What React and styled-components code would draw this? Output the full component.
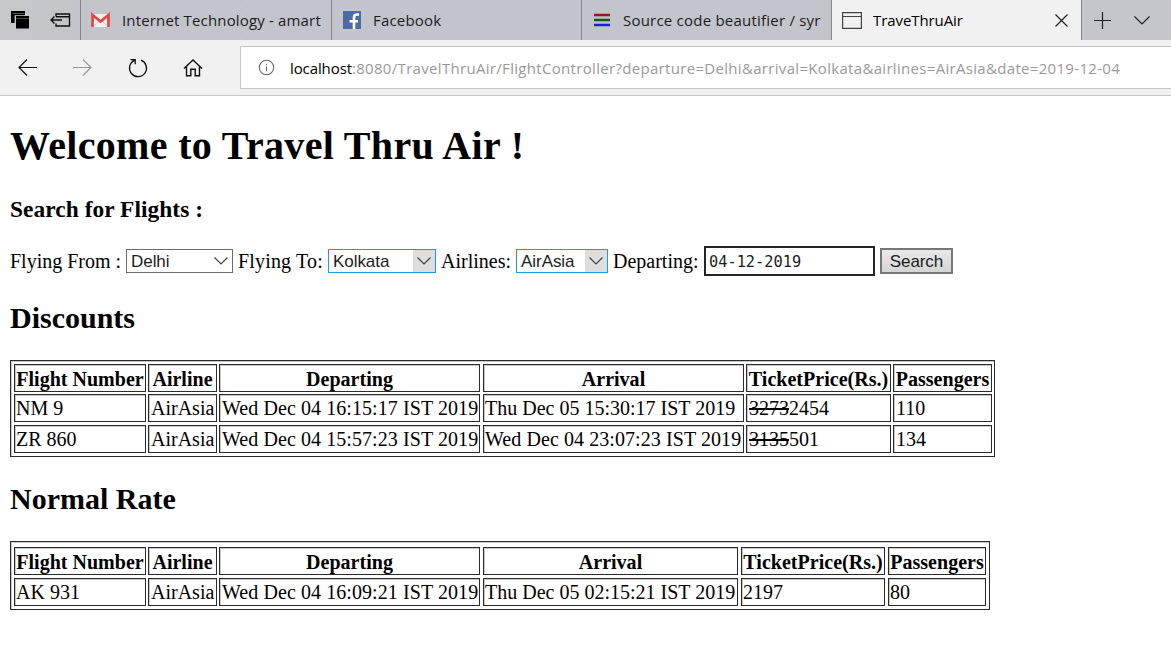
import React from 'react';
import styled, { createGlobalStyle } from 'styled-components';

const Global = createGlobalStyle`
  * { box-sizing: border-box; }
  html, body { margin: 0; padding: 0; background: #fff; overflow: hidden; }
`;

const Window = styled.div`
  width: 1171px;
  height: 645px;
  overflow: hidden;
  background: #fff;
  color: #000;
  font-family: "Liberation Serif", "Times New Roman", serif;
  font-size: 20px;
`;

const TabBar = styled.div`
  display: flex;
  height: 40px;
  background: linear-gradient(90deg, #c5c7c8 0, #c3c5cb 90px, #c1c4cb 480px, #c5c6cc 100%);
`;

const TabActions = styled.div`
  display: flex;
  align-items: center;
  width: 80px;
  padding-left: 11px;
  gap: 21px;
`;

const Tab = styled.div`
  display: flex;
  align-items: center;
  width: ${(p) => p.$width}px;
  padding-left: ${(p) => p.$pad}px;
  border-left: 1px solid #85878b;
  background: ${(p) => (p.$active ? '#f1f1f1' : 'transparent')};
  color: ${(p) => (p.$active ? '#000' : '#1c1c1e')};
`;

const TabIcon = styled.span`
  display: flex;
  flex: none;
  width: ${(p) => p.$width}px;
`;

const Drawing = styled.svg`
  display: block;
  flex: none;
`;

const TabTitle = styled.span`
  font-family: "Open Sans", "Noto Sans", sans-serif;
  font-size: 15px;
  line-height: 20px;
  white-space: nowrap;
  overflow: hidden;
  letter-spacing: ${(p) => p.$spacing}px;
  width: ${(p) => p.$width}px;
`;

const CloseSlot = styled.span`
  display: flex;
  margin-left: auto;
  margin-right: 13px;
`;

const TabTail = styled.div`
  display: flex;
  flex: 1;
  align-items: center;
  gap: 23px;
  padding-left: 12px;
  border-left: 1px solid #85878b;
`;

const Toolbar = styled.div`
  display: flex;
  height: 56px;
  background: #f1f1f1;
  border-bottom: 1px solid #c8c8c8;
`;

const NavButtons = styled.div`
  display: flex;
  width: 240px;
  padding: 17px 0 0 17px;
  gap: 33px;
`;

const AddressBar = styled.div`
  display: flex;
  flex: 1;
  align-items: center;
  height: 43px;
  margin-top: 6px;
  padding-left: 17px;
  background: #fff;
  border: 1px solid #c6c6c6;
  border-right: 0;
`;

const Url = styled.span`
  margin-left: 15px;
  font-family: "Open Sans", "Noto Sans", sans-serif;
  font-size: 15px;
  line-height: 22px;
  letter-spacing: 0.315px;
  white-space: nowrap;
  color: #999;
`;

const Host = styled.span`
  color: #000;
  letter-spacing: -0.1px;
`;

const Page = styled.main`
  padding: 0 10px;
`;

const Title = styled.h1`
  margin: 27px 0 0;
  font-size: 40px;
  line-height: 46px;
  letter-spacing: 0.34px;
`;

const Subtitle = styled.h3`
  margin: 27px 0 0;
  font-size: 23.4px;
  line-height: 26px;
  letter-spacing: 0.05px;
`;

const SectionTitle = styled.h2`
  margin: 25px 0 0;
  font-size: 30px;
  line-height: 34px;
`;

const SearchForm = styled.form`
  display: flex;
  align-items: center;
  height: 30px;
  margin-top: 24px;
`;

const FieldLabel = styled.label`
  flex: none;
  width: ${(p) => p.$width}px;
  line-height: 30px;
  letter-spacing: ${(p) => p.$spacing || 0}px;
  white-space: nowrap;
`;

const Select = styled.button`
  display: flex;
  flex: none;
  align-items: stretch;
  justify-content: space-between;
  width: ${(p) => p.$width}px;
  height: 24px;
  margin: 0 5px 0 0;
  padding: 0 0 0 4px;
  border: 1px solid ${(p) => (p.$filled ? '#1e9bdc' : '#6c6c6c')};
  border-radius: 0;
  background: #fff;
  color: #1c1c1c;
  font: 17px/24px "Liberation Sans", Arial, sans-serif;
  letter-spacing: -0.05px;
  text-align: left;
`;

const SelectArrow = styled.span`
  display: flex;
  align-items: center;
  justify-content: center;
  width: 22px;
  height: 22px;
  background: ${(p) => (p.$filled ? '#dedede' : '#fff')};
`;

const DateInput = styled.input`
  width: 171px;
  height: 30px;
  margin: 0 5px 0 0;
  padding: 1px 3px 0;
  border: 2px solid #252525;
  border-radius: 0;
  background: #fff;
  color: #1c1c1c;
  font: 15.3px "DejaVu Sans Mono", monospace;
`;

const SearchButton = styled.button`
  width: 73px;
  height: 26px;
  padding: 1px 0 0;
  border: 2px solid #777;
  border-radius: 0;
  background: linear-gradient(#e9e9e9, #d5d5d5);
  color: #1c1c1c;
  font: 17px/20px "Liberation Sans", Arial, sans-serif;
  letter-spacing: -0.1px;
`;

const Table = styled.table`
  display: block;
  width: ${(p) => p.$width}px;
  height: ${(p) => p.$height}px;
  margin-top: 25px;
  padding: ${(p) => p.$top}px 0 0 3px;
  border: 1px solid #2b2b2b;
  box-shadow: inset 1px 1px 0 #c9c9c9;
`;

const Body = styled.tbody`
  display: flex;
  flex-direction: column;
`;

const Row = styled.tr`
  display: grid;
  grid-template-columns: ${(p) => p.$tracks};
  height: ${(p) => p.$height}px;
`;

const Cell = styled.td`
  height: 28px;
  width: ${(p) => p.$width}px;
  padding: 0 0 0 ${(p) => p.$pad}px;
  border: 1px solid #2b2b2b;
  box-shadow: inset 1px 1px 0 #c9c9c9;
  line-height: 27px;
  white-space: nowrap;
  text-align: left;
  letter-spacing: ${(p) => p.$spacing}px;
`;

const HeadCell = styled(Cell)`
  padding: 0;
  font-weight: bold;
  line-height: 28px;
  text-align: center;
  letter-spacing: 0.02px;
`;

const HEADINGS = ['Flight Number', 'Airline', 'Departing', 'Arrival', 'TicketPrice(Rs.)', 'Passengers'];

function FlightTable({ widths, tracks, pads, rows, rowHeights, width, height, top }) {
  const template = tracks.map((t) => t + 'px').join(' ');
  return (
    <Table $width={width} $height={height} $top={top}>
      <Body>
        <Row $tracks={template} $height={rowHeights[0]}>
          {HEADINGS.map((h, i) => (
            <HeadCell as="th" key={h} $width={widths[i]}>{h}</HeadCell>
          ))}
        </Row>
        {rows.map((row, r) => (
          <Row key={r} $tracks={template} $height={rowHeights[r + 1]}>
            {row.map((value, i) => (
              <Cell
                key={i}
                $width={widths[i]}
                $pad={pads[i]}
                $spacing={typeof value === 'string' && value.startsWith('Wed') ? 0.075 : 0}
              >
                {value}
              </Cell>
            ))}
          </Row>
        ))}
      </Body>
    </Table>
  );
}

function Stroke({ w, h, color = '#222', sw = 1.2, children }) {
  return (
    <Drawing width={w} height={h} viewBox={`0 0 ${w} ${h}`} fill="none" stroke={color} strokeWidth={sw}>
      {children}
    </Drawing>
  );
}

function Dropdown({ value, width, filled }) {
  return (
    <Select type="button" $width={width} $filled={filled}>
      {value}
      <SelectArrow $filled={filled}>
        <Stroke w={14} h={8} color="#444"><path d="M.5 .5 7 7 13.5 .5" /></Stroke>
      </SelectArrow>
    </Select>
  );
}

export default function App() {
  return (
    <Window>
      <Global />
      <TabBar>
        <TabActions>
          <Drawing width="18" height="18" viewBox="0 0 18 18">
            <path d="M0 0h14v4H4v8H0z" fill="#000" />
            <path d="M1.5 2.5H13" stroke="#555" />
            <path d="M5 5h13v12.5H5z" fill="#000" />
            <path d="M5 7.5h13" stroke="#444" />
            <path d="M3.5 12V4.500H14" fill="none" stroke="#777" strokeWidth=".6" />
          </Drawing>
          <Stroke w={21} h={16} color="#111" sw={1.4}>
            <path d="M6 4.500V2h13.500v12H6v-2.500M6 4.700h13.500M1 8h11M4.500 4.500 1 8l3.500 3.500" />
          </Stroke>
        </TabActions>
        <Tab $width={251} $pad={9}>
          <TabIcon $width={32}>
            <Drawing width="21" height="16" viewBox="0 0 21 16">
              <path d="M1 2h19v13H1z" fill="#f7eeee" />
              <path d="m4 14 5-5h3l5 5" fill="none" stroke="#e5c8c8" />
              <path d="M2.500 15V3l8 6.500 8-6.500v12" fill="none" stroke="#dc4a48" strokeWidth="2.800" />
            </Drawing>
          </TabIcon>
          <TabTitle $width={200} $spacing={0.16}>Internet Technology - amart</TabTitle>
        </Tab>
        <Tab $width={250} $pad={11}>
          <TabIcon $width={30}>
            <Drawing width="18" height="18" viewBox="0 0 18 18">
              <path d="M0 0h18v18H0z" fill="#4e69a8" />
              <path d="M11 18v-7.500M6.500 10.300H15M11 11V6.500q0-3 3-3h2" fill="none" stroke="#fff" strokeWidth="2.600" />
            </Drawing>
          </TabIcon>
          <TabTitle $width={150} $spacing={0.2}>Facebook</TabTitle>
        </Tab>
        <Tab $width={250} $pad={12}>
          <TabIcon $width={29}>
            <Drawing width="16" height="14" viewBox="0 0 16 14">
              <path d="M0 2h16" stroke="#971b1e" strokeWidth="2.500" />
              <path d="M0 7h16" stroke="#175b1c" strokeWidth="2.500" />
              <path d="M0 12h16" stroke="#1c1cf5" strokeWidth="2.500" />
            </Drawing>
          </TabIcon>
          <TabTitle $width={199} $spacing={0.22}>Source code beautifier / syr</TabTitle>
        </Tab>
        <Tab $width={250} $pad={10} $active>
          <TabIcon $width={31}>
            <Stroke w={20} h={17} color="#444"><path d="M.6.600h18.800v15.800H.600zM.600 4.500h18.800" /></Stroke>
          </TabIcon>
          <TabTitle $width={110} $spacing={-0.08}>TraveThruAir</TabTitle>
          <CloseSlot>
            <Stroke w={13} h={13}><path d="m.500.500 12 12m0-12-12 12" /></Stroke>
          </CloseSlot>
        </Tab>
        <TabTail>
          <Stroke w={17} h={17}><path d="M0 8.500h17M8.500 0v17" /></Stroke>
          <Stroke w={16} h={9}><path d="m.500.500 7.500 7.500L15.500.500" /></Stroke>
        </TabTail>
      </TabBar>
      <Toolbar>
        <NavButtons>
          <Stroke w={22} h={22} color="#111" sw={1.2}><path d="M20 10.500H2M10 2.500l-8 8 8 8" /></Stroke>
          <Stroke w={22} h={22} color="#999"><path d="M1 10.500h18M11 2.500l8 8-8 8" /></Stroke>
          <Stroke w={22} h={22} color="#111" sw={1.3}>
            <path d="M14 3.200a8.500 8.500 0 1 1-6.500.200M3.500 2.700h4.700v4.500" />
          </Stroke>
          <Stroke w={22} h={22} color="#111" sw={1.4}>
            <path d="m2 11.500 9-8.500 9 8.500M4.500 9.500v9.300h4.300v-6.500h4.400v6.500h4.300V9.500" />
          </Stroke>
        </NavButtons>
        <AddressBar>
          <Stroke w={17} h={17} color="#666" sw={1.1}>
            <circle cx="8.500" cy="8.500" r="7.200" />
            <path d="M8.500 7.500v4.800M8.500 4.700v1.500" />
          </Stroke>
          <Url>
            <Host>localhost</Host>:8080/TravelThruAir/FlightController?departure=Delhi&amp;arrival=Kolkata&amp;airlines=AirAsia&amp;date=2019-12-04
          </Url>
        </AddressBar>
      </Toolbar>
      <Page>
        <Title>Welcome to Travel Thru Air !</Title>
        <Subtitle>Search for Flights :</Subtitle>
        <SearchForm>
          <FieldLabel $width={116}>Flying From :</FieldLabel>
          <Dropdown value="Delhi" width={107} />
          <FieldLabel $width={90} $spacing={0.16}>Flying To:</FieldLabel>
          <Dropdown value="Kolkata" width={108} filled />
          <FieldLabel $width={75}>Airlines:</FieldLabel>
          <Dropdown value="AirAsia" width={92} filled />
          <FieldLabel $width={91}>Departing:</FieldLabel>
          <DateInput defaultValue="04-12-2019" />
          <SearchButton type="button">Search</SearchButton>
        </SearchForm>
        <SectionTitle>Discounts</SectionTitle>
        <FlightTable
          width={985}
          height={97}
          top={3}
          tracks={[134, 71, 264, 263, 147, 99]}
          widths={[132, 69, 261, 261, 145, 99]}
          pads={[1, 2, 2, 1, 2, 2]}
          rowHeights={[30, 31, 28]}
          rows={[
            ['NM 9', 'AirAsia', 'Wed Dec 04 16:15:17 IST 2019', 'Thu Dec 05 15:30:17 IST 2019', <><s>3273</s>2454</>, '110'],
            ['ZR 860', 'AirAsia', 'Wed Dec 04 15:57:23 IST 2019', 'Wed Dec 04 23:07:23 IST 2019', <><s>3135</s>501</>, '134'],
          ]}
        />
        <SectionTitle>Normal Rate</SectionTitle>
        <FlightTable
          width={980}
          height={69}
          top={5}
          tracks={[134, 71, 264, 258, 147, 99]}
          widths={[132, 69, 261, 255, 144, 98]}
          pads={[1, 2, 2, 1, 1, 1]}
          rowHeights={[31, 28]}
          rows={[['AK 931', 'AirAsia', 'Wed Dec 04 16:09:21 IST 2019', 'Thu Dec 05 02:15:21 IST 2019', '2197', '80']]}
        />
      </Page>
    </Window>
  );
}
